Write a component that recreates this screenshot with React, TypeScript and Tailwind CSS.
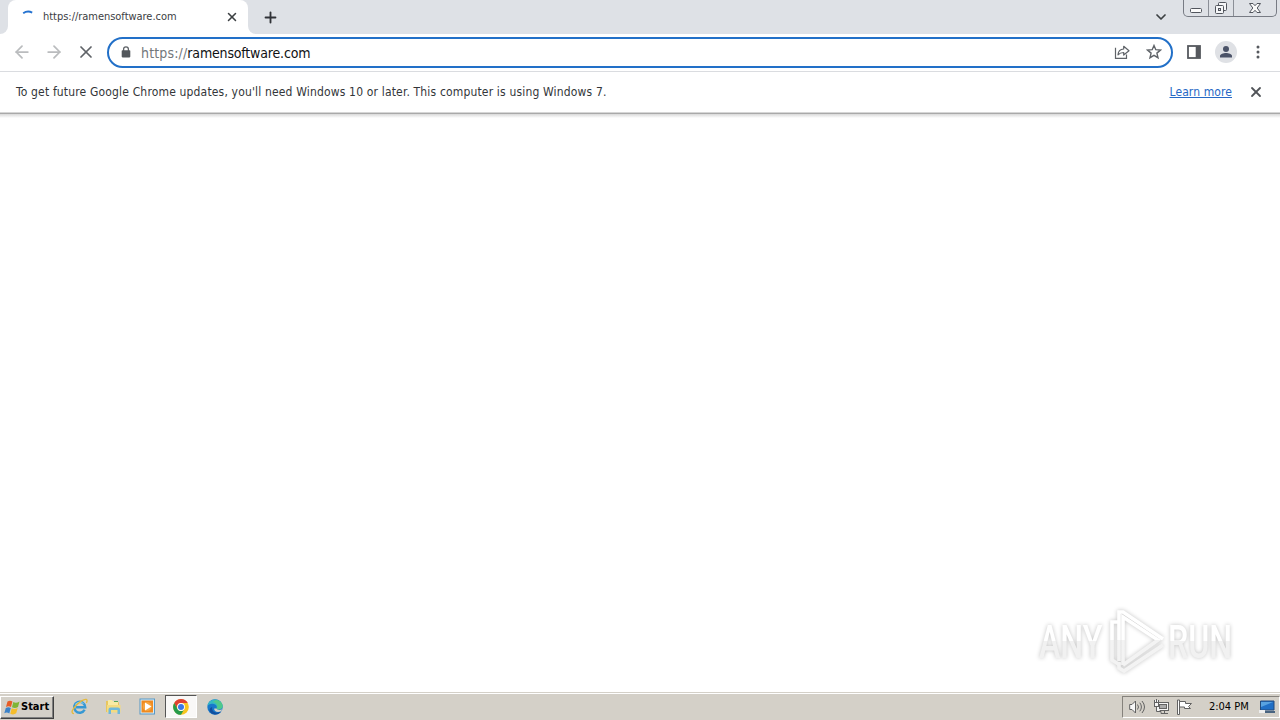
import { ArrowLeft, ArrowRight, X, Plus, ChevronDown } from "lucide-react";

function LoadingArc() {
  return (
    <svg width="16" height="16" viewBox="0 0 16 16" fill="none">
      <path d="M3.2 3.2Q7.6 0.2 12.2 2.6" stroke="#2472d0" strokeWidth="1.9" />
    </svg>
  );
}

function WindowControls() {
  return (
    <div className="flex h-[17px] w-[94px] rounded-b-[5px] border border-t-0 border-[#777b84] text-[#51555d]">
      <div className="flex w-[25px] items-center justify-center border-r border-[#8b8f97]">
        <svg width="14" height="14" viewBox="0 0 14 14" fill="#fafafa" stroke="currentColor">
          <rect x="1.5" y="7.5" width="11" height="4" rx="1" />
        </svg>
      </div>
      <div className="flex w-[25px] items-center justify-center border-r border-[#8b8f97]">
        <svg width="14" height="14" viewBox="0 0 14 14" fill="#f5f6f8" stroke="currentColor">
          <rect x="4.5" y="1.5" width="8" height="8" rx="1" />
          <rect x="1.5" y="4.5" width="8" height="8" rx="1" />
          <rect x="4.5" y="7.5" width="2" height="2" fill="#dee1e6" />
        </svg>
      </div>
      <div className="flex flex-1 items-center justify-center">
        <svg width="14" height="14" viewBox="0 0 14 14" fill="#fafafa" stroke="currentColor">
          <path d="M1.5 2.5H5L7 4.7L9 2.5H12.5L9.2 7L12.5 11.5H9L7 9.3L5 11.5H1.5L4.8 7Z" />
        </svg>
      </div>
    </div>
  );
}

function TabStrip() {
  return (
    <div className="flex h-[34px] bg-[#dee1e6]">
      <div className="w-2 bg-white">
        <div className="h-full rounded-br-lg bg-[#dee1e6]" />
      </div>
      <div className="flex h-full w-60 items-center rounded-t-lg bg-white pl-3">
        <div className="mt-px">
          <LoadingArc />
        </div>
        <span className="ml-[7px] mt-px flex-1 whitespace-nowrap text-[11px] tracking-[-0.03px] text-[#3c4043]">https://ramensoftware.com</span>
        <X className="mr-[9px] h-[14px] w-[14px] text-[#3c4043]" strokeWidth={2.6} />
      </div>
      <div className="w-2 bg-white">
        <div className="h-full rounded-bl-lg bg-[#dee1e6]" />
      </div>
      <div className="flex w-7 items-center justify-center">
        <Plus className="h-[17px] w-[17px] text-[#303338]" strokeWidth={2.6} />
      </div>
      <div className="ml-auto flex items-start pr-[3px]">
        <ChevronDown className="mr-[14px] mt-[9px] h-4 w-4 text-[#3c4043]" strokeWidth={2.6} />
        <WindowControls />
      </div>
    </div>
  );
}

function Toolbar() {
  return (
    <div className="flex h-[38px] items-center border-b border-[#dadce0] bg-white pb-px pl-3">
      <ArrowLeft className="h-5 w-5 text-[#babcbe]" strokeWidth={2.1} />
      <ArrowRight className="ml-3 h-5 w-5 text-[#babcbe]" strokeWidth={2.1} />
      <X className="ml-3 h-5 w-5 text-[#5f6368]" strokeWidth={2.1} />
      <div className="ml-[11px] mt-px flex h-[31px] w-[1066px] items-center rounded-full border-2 border-[#2270c8] pl-3">
        <svg className="mb-px" width="10" height="12" viewBox="0 0 10 12" fill="none">
          <path d="M2.6 5V3.2a2.4 2.4 0 0 1 4.8 0V5" stroke="#5f6368" strokeWidth="1.3" />
          <rect x="0.7" y="4.2" width="8.6" height="7.2" rx="0.8" fill="#53575c" />
        </svg>
        <span className="ml-[10px] mt-px flex-1 text-[14px] tracking-[-0.17px] text-[#101113]">
          <span className="tracking-[0.15px] text-[#73777b]">https://</span>ramensoftware.com
        </span>
        <svg className="mb-px" width="16" height="16" viewBox="0 0 16 16" fill="none" stroke="#5f6368" strokeWidth="1.2">
          <path d="M1.5 3.8V14.4H12.5V10.5" />
          <path d="M4 10.8C4.2 7.2 6.3 5.3 9.7 5V2.3L15 6.7L9.7 11V8.5C7.3 8.5 5.4 9.2 4 10.8Z" strokeLinejoin="round" />
        </svg>
        <svg className="mb-px ml-4 mr-[9px]" width="16" height="16" viewBox="0 0 16 16" fill="none" stroke="#5f6368" strokeWidth="1.4">
          <path d="M8 1.5L9.8 5.7L14.4 6.1L10.9 9.1L12 13.7L8 11.3L4 13.7L5.1 9.1L1.6 6.1L6.2 5.7Z" />
        </svg>
      </div>
      <svg className="ml-[14px]" width="14" height="14" viewBox="0 0 14 14">
        <rect x="1" y="1" width="12" height="12" fill="none" stroke="#56595e" strokeWidth="1.8" />
        <rect x="8.7" y="1" width="4.3" height="12" fill="#56595e" />
      </svg>
      <svg className="ml-[14px]" width="22" height="22" viewBox="0 0 22 22">
        <circle cx="11" cy="11" r="11" fill="#dfe1e5" />
        <circle cx="11" cy="8" r="3" fill="#4b5368" />
        <path d="M5 16.5V15C5 12.9 8.5 12 11 12S17 12.9 17 15V16.5Z" fill="#4b5368" />
      </svg>
      <svg className="ml-[19px]" width="4" height="14" viewBox="0 0 4 14" fill="#56595e">
        <circle cx="2" cy="2" r="1.5" />
        <circle cx="2" cy="7" r="1.5" />
        <circle cx="2" cy="12" r="1.5" />
      </svg>
    </div>
  );
}

function InfoBar() {
  return (
    <div className="flex h-10 items-center bg-white pl-4 pr-4 text-[12px] text-[#333639]">
      <span className="flex-1 tracking-[0.165px]">
        To get future Google Chrome updates, you'll need Windows 10 or later. This computer is using Windows 7.
      </span>
      <span className="tracking-[0.1px] text-[#2668c5] underline">Learn more</span>
      <X className="ml-4 h-4 w-4 text-[#505357]" strokeWidth={2.7} />
    </div>
  );
}

function Watermark() {
  return (
    <svg className="overflow-visible drop-shadow-[0_0_2px_rgba(0,0,0,0.24)]" width="204" height="70" viewBox="0 0 204 70">
      <defs>
        <linearGradient id="fade" x1="0" y1="0" x2="0" y2="70" gradientUnits="userSpaceOnUse">
          <stop offset="0.5" stopColor="#ffffff" />
          <stop offset="0.5" stopColor="#f3f3f3" />
        </linearGradient>
        {/* the text groups are scaled, so they need the split in their own baseline space */}
        <linearGradient id="fadeText" x1="0" y1="-52" x2="0" y2="18" gradientUnits="userSpaceOnUse">
          <stop offset="0.5" stopColor="#ffffff" />
          <stop offset="0.5" stopColor="#f1f1f1" />
        </linearGradient>
      </defs>
      <g fill="none" stroke="url(#fade)" strokeWidth="3.6">
        <path d="M85 17H77V55L85 60" />
        <path d="M88 60V12L123 35L88 60" />
        <path d="M84 56V7H88L128 34" />
        <path d="M84 57V63L89 66L128 40" />
      </g>
      <g fill="url(#fadeText)" className="font-['Roboto','Liberation_Sans',sans-serif] text-[46px] font-medium">
        <text transform="translate(4 53) scale(0.7 1)">ANY</text>
        <text transform="translate(133 53) scale(0.7 1)">RUN</text>
      </g>
    </svg>
  );
}

function WindowsFlag() {
  return (
    <svg width="17" height="17" viewBox="0 0 17 17">
      <path d="M3.5 2.5C5.5 1.2 7 1.5 8.4 2.6L7 8C5.2 7 3.8 7 2 8Z" fill="#e75c26" />
      <path d="M9.3 3C11 4 13 4 15.5 2.5L14 8C12 9.3 10 9.2 8 8.3Z" fill="#7fb536" />
      <path d="M1.8 9C3.8 7.8 5.4 8.2 6.8 9L5.3 14.4C3.6 13.3 2 13.3.3 14.3Z" fill="#3c82c8" />
      <path d="M7.7 9.3C9.7 10.3 11.6 10.2 13.7 9L12.2 14.3C10.3 15.7 8.3 15.7 6.3 14.7Z" fill="#f5bd2b" />
    </svg>
  );
}

function ExplorerE() {
  return (
    <svg width="17" height="17" viewBox="0 0 17 17" fill="none">
      <path d="M13.6 11.8A5.5 5.5 0 1 1 14.2 9.2H5" stroke="#3698d3" strokeWidth="2.5" />
      <path d="M4 6.6Q8 2.5 12.5 5.5" stroke="#8fd3f2" strokeWidth="1" />
      <path d="M3 15.7C-2 15.5 3.5 7.5 10.5 2.9C14.5 .3 17.4 .8 15.4 5" stroke="#e5ba3c" strokeWidth="1.3" />
    </svg>
  );
}

function FolderIcon() {
  return (
    <svg width="17" height="17" viewBox="0 0 17 17">
      <path d="M1 3H6L7 4.2H14V14H1Z" fill="#e8c65e" />
      <path d="M3 2H7L8 3.5H13V7H3Z" fill="#f8eaa5" />
      <path d="M2 7H15.5V14.5H2Z" fill="#f3db81" />
      <path d="M3.5 16V11.5Q3.5 9.5 5.5 9.5H13Q15 9.5 15 11.5V16H12.5V12H6V16Z" fill="#6eb8dc" />
      <path d="M9 3.5H13" stroke="#54a45a" />
    </svg>
  );
}

function MediaIcon() {
  return (
    <svg width="17" height="17" viewBox="0 0 17 17">
      <rect x="1" y="1" width="14.5" height="15" fill="#d9ecf7" stroke="#5697c5" />
      <rect x="2.5" y="2.5" width="11.5" height="12" fill="#f08a20" />
      <circle cx="8.2" cy="8.5" r="4.5" fill="#f5a540" />
      <path d="M6 4.5L12.5 8.5L6 12.5Z" fill="#fff" />
    </svg>
  );
}

function ChromeIcon() {
  return (
    <svg width="16" height="16" viewBox="0 0 16 16">
      <circle cx="8" cy="8" r="7.8" fill="#f8c51f" />
      <path d="M1.2 4.1A7.8 7.8 0 0 1 14.8 4.1H8A3.9 3.9 0 0 0 4.6 10Z" fill="#e04132" />
      <path d="M1.2 4.1L4.6 10A3.9 3.9 0 0 0 11.4 10L8 15.8A7.8 7.8 0 0 1 1.2 4.1Z" fill="#279b4b" />
      <circle cx="8" cy="8" r="3.9" fill="#fff" />
      <circle cx="8" cy="8" r="3" fill="#3a78e7" />
    </svg>
  );
}

function EdgeIcon() {
  return (
    <svg width="16" height="16" viewBox="0 0 16 16">
      <circle cx="8" cy="8" r="7.7" fill="#1878ca" />
      <path d="M.5 7C1.5-2 14.3-1.4 15.7 6.5C16.2 10.5 11 11.5 9.3 9.8C11.2 7 8 4.5 5 4.8C2.7 5 1 6 .5 7Z" fill="#35b9c4" />
      <path d="M9 1C13 1 15.5 4 15.7 7C15.8 10.2 11.5 11.2 9.3 9.8C11.5 7.5 10 3.5 5.5 3Z" fill="#5ed16d" opacity="0.65" />
      <path d="M5.2 8C4 13 9.6 15.4 14.2 12.3C12 16 7 16.4 4 14C1.5 11.8 2.4 9 5.2 8Z" fill="#124f9f" />
      <path d="M9.2 9.6C10.2 11.2 13 11.4 15 10.2L14.3 12.2C10 14 7 12.2 7.2 9.4Z" fill="#d4d0c8" />
    </svg>
  );
}

function SystemTray() {
  return (
    <div className="ml-auto flex h-[22px] w-[158px] items-center border border-b-white border-l-[#85827c] border-r-white border-t-[#85827c] pl-[6px] text-[#626262]">
      <svg width="17" height="16" viewBox="0 0 17 16" fill="#f8f8f8" stroke="currentColor">
        <path d="M.7 5.5H3L6.5 2V14L3 10.5H.7Z" />
        <path d="M8.5 5.5Q10.5 8 8.5 10.5M10.8 3.7Q14 8 10.8 12.3M13 2Q18 8 13 14" fill="none" />
      </svg>
      <svg className="ml-[7px]" width="17" height="16" viewBox="0 0 17 16" fill="#f5f5f5" stroke="currentColor">
        <rect x="4.5" y="3.5" width="11" height="8" />
        <rect x="6.5" y="5.5" width="7" height="4" fill="#aaa" />
        <path d="M8 14.5H15M11.5 12V14M1.5 1V4.5H5.5V1M3.5 0V4.5M3.5 4.5V12.5H8V14.5" />
        <rect x="1.5" y="3.5" width="4" height="4" />
      </svg>
      <svg className="ml-[6px]" width="17" height="16" viewBox="0 0 17 16" fill="#fff" stroke="currentColor">
        <path d="M1.5 1V15.5H3.5V1Z" />
        <path d="M3.5 2.5H9.5V4.5H15.5L12.5 7.5L14.5 9.5H8.5V8H3.5Z" />
      </svg>
      <span className="ml-4 mt-px w-[42px] whitespace-nowrap text-[11px] tracking-[-0.02px] text-black">2:04 PM</span>
      <svg className="ml-2" width="16" height="14" viewBox="0 0 16 14">
        <path d="M1.5 1H15V10H1.5Z" fill="#206fc6" stroke="#234b7c" />
        <path d="M2 2H14L2 7Z" fill="#58a2e1" />
        <path d="M0 10H6V13H0Z" fill="#eeeeee" />
        <path d="M6 11H16V13H6Z" fill="#496480" />
      </svg>
    </div>
  );
}

function Taskbar() {
  return (
    <div className="flex h-7 items-center border-t border-[#d4d0c8] bg-[#d4d0c8] shadow-[inset_0_1px_0_#ffffff]">
      <button className="mt-px flex h-[23px] w-[54px] items-center border border-b-[#404040] border-l-white border-r-[#404040] border-t-white pl-[3px] shadow-[inset_-1px_-1px_0_#808080]">
        <WindowsFlag />
        <span className="text-[11px] font-bold text-black">Start</span>
      </button>
      <div className="ml-[17px] flex items-center gap-[17px]">
        <ExplorerE />
        <FolderIcon />
        <MediaIcon />
      </div>
      <div className="ml-[9px] flex h-[23px] w-8 items-center justify-center border border-b-white border-l-[#555] border-r-white border-t-[#555] bg-[#f9f8f7]">
        <ChromeIcon />
      </div>
      <div className="ml-[10px]">
        <EdgeIcon />
      </div>
      <SystemTray />
    </div>
  );
}

export default function App() {
  return (
    <div className="flex h-[720px] w-[1280px] flex-col overflow-hidden bg-white font-['DejaVu_Sans_Condensed','DejaVu_Sans','Noto_Sans',sans-serif]">
      <TabStrip />
      <Toolbar />
      <InfoBar />
      <div className="h-px bg-[#d6d6d6]" />
      <div className="h-px bg-[#a9a9a9]" />
      <div className="h-[4px] bg-linear-to-b from-[#d9d9d9] to-white" />
      <main className="flex flex-1 items-end justify-end pb-[17px] pr-[41px]">
        <Watermark />
      </main>
      <Taskbar />
    </div>
  );
}
